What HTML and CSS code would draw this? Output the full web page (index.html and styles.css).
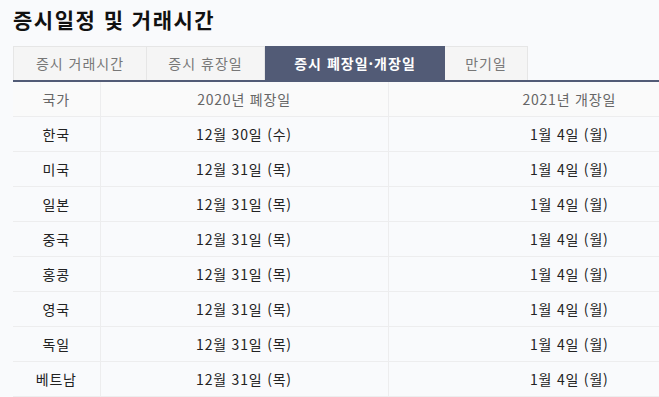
FILE: index.html
```html
<!DOCTYPE html>
<html lang="ko">
<head>
<meta charset="utf-8">
<link rel="stylesheet" href="styles.css">
</head>
<body>
<div class="page">
  <h1 class="title">증시일정 및 거래시간</h1>
  <div class="tabs">
    <div class="tab tab-1">증시 거래시간</div>
    <div class="tab tab-2">증시 휴장일</div>
    <div class="tab tab-active">증시 폐장일·개장일</div>
    <div class="tab tab-4">만기일</div>
  </div>
  <table class="sched">
    <colgroup><col class="c1"><col class="c2"><col class="c3"></colgroup>
    <thead>
      <tr><th>국가</th><th>2020년 폐장일</th><th>2021년 개장일</th></tr>
    </thead>
    <tbody>
      <tr><td>한국</td><td>12월 30일 (수)</td><td>1월 4일 (월)</td></tr>
      <tr><td>미국</td><td>12월 31일 (목)</td><td>1월 4일 (월)</td></tr>
      <tr><td>일본</td><td>12월 31일 (목)</td><td>1월 4일 (월)</td></tr>
      <tr><td>중국</td><td>12월 31일 (목)</td><td>1월 4일 (월)</td></tr>
      <tr><td>홍콩</td><td>12월 31일 (목)</td><td>1월 4일 (월)</td></tr>
      <tr><td>영국</td><td>12월 31일 (목)</td><td>1월 4일 (월)</td></tr>
      <tr><td>독일</td><td>12월 31일 (목)</td><td>1월 4일 (월)</td></tr>
      <tr><td>베트남</td><td>12월 31일 (목)</td><td>1월 4일 (월)</td></tr>
    </tbody>
  </table>
</div>
</body>
</html>
```

FILE: styles.css
```css
html, body {
  margin: 0;
  padding: 0;
  overflow: hidden;
  background: #f9fafc;
}
body {
  font-family: "Noto Sans CJK KR", "Noto Sans", sans-serif;
  color: #222;
}
.page {
  padding: 6px 0 0 13px;
  overflow: hidden;
}
.title {
  margin: 0;
  font-size: 21px;
  line-height: 26px;
  font-weight: 700;
  color: #111;
  letter-spacing: 1.5px;
}
.tabs {
  display: flex;
  width: 737px;
  margin-top: 14px;
  border-bottom: 2px solid #525b76;
}
.tab {
  height: 33px;
  line-height: 33px;
  font-size: 14px;
  color: #777;
  background: #f5f5f5;
  border: 1px solid #e6e6e6;
  border-bottom: none;
  text-align: center;
  letter-spacing: 1px;
}
.tab-1 { width: 132px; }
.tab-2 { width: 117px; border-left: none; }
.tab-active {
  width: 178px;
  background: #525b76;
  border-color: #525b76;
  color: #fff;
  font-weight: 700;
}
.tab-4 { width: 82px; border-left: none; }
.sched {
  border-collapse: collapse;
  width: 737px;
  table-layout: fixed;
  font-size: 14px;
  letter-spacing: 0.8px;
}
.c1 { width: 87px; }
.c2 { width: 288px; }
.c3 { width: 362px; }
.sched th, .sched td {
  height: 34px;
  padding: 0;
  text-align: center;
  border-bottom: 1px solid #ededee;
  border-left: 1px solid #ededee;
}
.sched th:first-child, .sched td:first-child { border-left: none; }
.sched th {
  font-weight: 400;
  color: #666;
  background: #fafafa;
}
.sched td { color: #222; }
```
